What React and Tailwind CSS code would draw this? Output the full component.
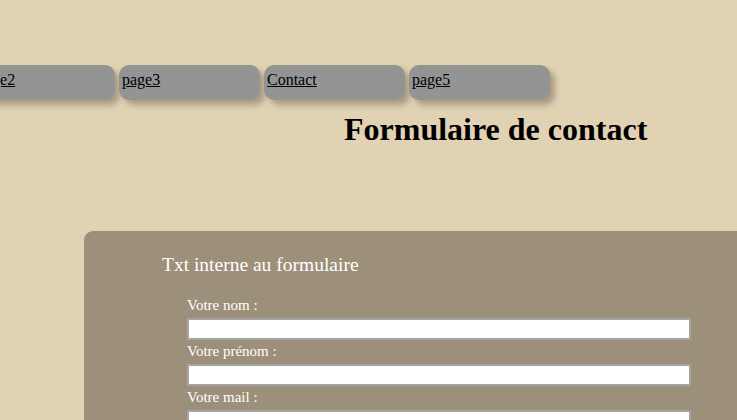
export default function App() {
  const tabs = ["page2", "page3", "Contact", "page5"];
  const fields = ["Votre nom :", "Votre prénom :", "Votre mail :"];
  return (
    <div
      className="w-[737px] h-[420px] overflow-hidden bg-[#e2d2b4] text-black"
      style={{ fontFamily: '"Liberation Serif", "Times New Roman", serif' }}
    >
      <nav className="pt-[65px] ml-[-26px] flex gap-[4px]">
        {tabs.map((t) => (
          <div
            key={t}
            className="w-[141px] h-[35px] shrink-0 rounded-[10px] bg-[#949494] shadow-[5px_5px_6px_#a89a80] pl-[3px] pt-[6px] text-[16px] leading-[18px]"
          >
            <a href="#" className="underline text-black">
              {t}
            </a>
          </div>
        ))}
      </nav>
      <h1 className="ml-[344px] mt-[11px] text-[32px] leading-[37px] font-bold">
        Formulaire de contact
      </h1>
      <div className="mt-[83px] ml-[84px] rounded-tl-[9px] bg-[#9d907b] pt-[22px] pb-[20px] text-white">
        <div className="pl-[78px] text-[19.5px] leading-[23px]">Txt interne au formulaire</div>
        <form className="pl-[103px] pt-[18px]">
          {fields.map((f) => (
            <div key={f}>
              <label className="block pt-[3px] pb-[4px] text-[15px] leading-[17px]">{f}</label>
              <input
                type="text"
                className="block w-[504px] h-[22px] bg-white border-2 border-[#a7a4a8] outline-none"
              />
            </div>
          ))}
        </form>
      </div>
    </div>
  );
}
